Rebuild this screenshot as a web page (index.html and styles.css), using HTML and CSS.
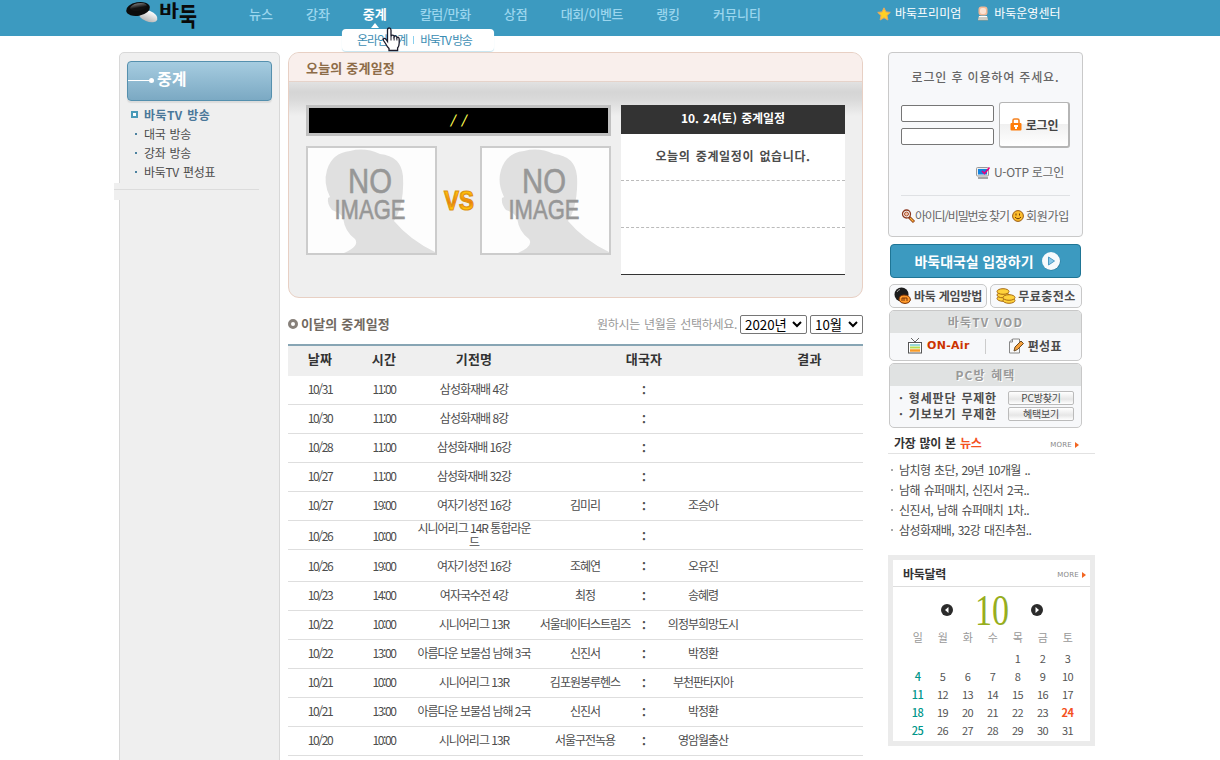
FILE: index.html
```
<!DOCTYPE html>
<html lang="ko">
<head>
    <meta charset="UTF-8">
    <title>바둑 - 중계</title>
    <link rel="stylesheet" href="styles.css">
</head>
<body>
    <div class="header">
        <div class="header-inner">
            <svg class="logo" width="72" height="30" viewBox="0 0 72 30">
                <defs>
                    <linearGradient id="white-stone" x1="0" y1="0" x2="0" y2="1">
                        <stop offset="0" stop-color="#fff"/>
                        <stop offset="1" stop-color="#b5b5b5"/>
                    </linearGradient>
                    <linearGradient id="black-stone" x1="0" y1="0" x2="0" y2="1">
                        <stop offset="0" stop-color="#777"/>
                        <stop offset=".6" stop-color="#111"/>
                    </linearGradient>
                </defs>
                <ellipse cx="22" cy="16" rx="10" ry="5.500" transform="rotate(22 22 16)" fill="url(#white-stone)"/>
                <ellipse cx="12" cy="9" rx="12" ry="6.800" transform="rotate(-10 12 9)" fill="#0c0c0c"/>
                <ellipse cx="12.500" cy="7" rx="8.500" ry="3.800" transform="rotate(-10 12.500 7)" fill="url(#black-stone)"/>
                <text class="logo-text" x="33" y="17" textLength="20" lengthAdjust="spacingAndGlyphs" font-size="17">바</text>
                <text class="logo-text" x="53" y="25.500" textLength="18" lengthAdjust="spacingAndGlyphs" font-size="26">둑</text>
            </svg>
            <ul class="nav">
                <li>뉴스</li>
                <li>강좌</li>
                <li class="on">중계</li>
                <li class="tight">칼럼/만화</li>
                <li>상점</li>
                <li class="tight">대회/이벤트</li>
                <li>랭킹</li>
                <li>커뮤니티</li>
            </ul>
            <div class="top-link">
                <svg width="14" height="14" viewBox="0 0 14 14"><path d="M7 .8l1.900 4.100 4.400.5-3.300 3 .9 4.600L7 10.800 3.100 13 4 8.400.7 5.400l4.400-.5z" fill="#ffd024" stroke="#e8a860"/></svg>
                <span>바둑프리미엄</span>
                <svg class="person" width="12" height="15" viewBox="0 0 12 15"><rect x="1.500" y=".5" width="9" height="9" rx="3" fill="#f2b896"/><rect x="3" y="2" width="6" height="6" rx="2" fill="#fbe3d3"/><path d="M2 10h8l1 4H1z" fill="#fff"/><path d="M1 12h10M1 14h10" stroke="#9a9a8a"/></svg>
                <span>바둑운영센터</span>
            </div>
        </div>
    </div>

    <div class="sub-nav">
        <span>온라인중계</span><i></i><span class="tv">바둑TV 방송</span>
    </div>
    <svg class="cursor" width="18" height="25" viewBox="0 0 18 25">
        <path d="M5.500 14.500V3q0-2 1.700-2T9 3v6.500q.3-1.500 1.800-1.300 1.200.1 1.300 1.500.5-1 1.700-.7 1 .3 1.100 1.600.6-.6 1.500-.2.800.4.800 1.800V16q0 3-1.600 5v2.500H7V21.500Q5 19.500 3.500 16.500l-2-3Q.8 12 1.900 11.500q1-.4 2 .7z" fill="#fff" stroke="#1b1b2c" stroke-width="1.300"/>
        <path d="M9 9.500v4M12.100 10v3.500M14.900 11v2.500" stroke="#1b1b2c"/>
    </svg>

    <div class="container">
        <div class="left">
            <div class="left-title"><i></i><b></b><span>중계</span></div>
            <ul class="left-menu">
                <li class="on">바둑TV 방송</li>
                <li>대국 방송</li>
                <li>강좌 방송</li>
                <li>바둑TV 편성표</li>
            </ul>
            <div class="left-line"></div>
        </div>

        <div class="main">
            <div class="today">
                <h2>오늘의 중계일정</h2>
                <div class="today-body">
                    <div class="match">
                        <div class="match-name">/ /</div>
                        <div class="players">
                            <svg class="photo" viewBox="0 0 127 105">
                                <path id="head" d="M36 105Q52 98 47 91 37 84 35 70 33 65 24 62 19 56 20 50l2-1Q15 35 19 22 24 5 42 3 57-1 72 6q21 2 23 22 1 17-3 32-2 7-6 13 16 19 41 31v1z" fill="#e0e0e0"/>
                                <text x="62" y="45" textLength="44" lengthAdjust="spacingAndGlyphs" font-size="35">NO</text>
                                <text x="62" y="71" textLength="71" lengthAdjust="spacingAndGlyphs" font-size="28">IMAGE</text>
                            </svg>
                            <svg class="vs" width="32" height="24" viewBox="0 0 32 24">
                                <defs>
                                    <linearGradient id="vs-fill" x1="0" y1="0" x2="0" y2="1">
                                        <stop offset=".2" stop-color="#ffc20a"/>
                                        <stop offset=".55" stop-color="#ee7f0c"/>
                                        <stop offset=".75" stop-color="#ffc20a"/>
                                    </linearGradient>
                                </defs>
                                <text x="1" y="21" textLength="30" lengthAdjust="spacingAndGlyphs" font-size="27">VS</text>
                            </svg>
                            <svg class="photo" viewBox="0 0 127 105">
                                <use href="#head"/>
                                <text x="62" y="45" textLength="44" lengthAdjust="spacingAndGlyphs" font-size="35">NO</text>
                                <text x="62" y="71" textLength="71" lengthAdjust="spacingAndGlyphs" font-size="28">IMAGE</text>
                            </svg>
                        </div>
                    </div>
                    <div class="today-list">
                        <h3>10. 24(토) 중계일정</h3>
                        <p>오늘의 중계일정이 없습니다.</p>
                        <p></p>
                        <p></p>
                    </div>
                </div>
            </div>

            <div class="month-head">
                <i class="ring"></i>
                <h2>이달의 중계일정</h2>
                <span>원하시는 년월을 선택하세요.</span>
                <div class="select year">2020년<svg width="10" height="7" viewBox="0 0 10 7"><path d="M1 1l4 4 4-4" fill="none" stroke="#000" stroke-width="2"/></svg></div>
                <div class="select month">10월<svg width="10" height="7" viewBox="0 0 10 7"><path d="M1 1l4 4 4-4" fill="none" stroke="#000" stroke-width="2"/></svg></div>
            </div>

            <table>
                <colgroup>
                    <col class="c-date"><col class="c-date"><col class="c-name"><col class="c-player"><col class="c-vs"><col class="c-player"><col>
                </colgroup>
                <thead>
                    <tr><th>날짜</th><th>시간</th><th>기전명</th><th colspan="3">대국자</th><th>결과</th></tr>
                </thead>
                <tbody>
                    <tr><td class="num">10/31</td><td class="num">11:00</td><td>삼성화재배 4강</td><td></td><td class="vs-mark">:</td><td></td><td></td></tr>
                    <tr><td class="num">10/30</td><td class="num">11:00</td><td>삼성화재배 8강</td><td></td><td class="vs-mark">:</td><td></td><td></td></tr>
                    <tr><td class="num">10/28</td><td class="num">11:00</td><td>삼성화재배 16강</td><td></td><td class="vs-mark">:</td><td></td><td></td></tr>
                    <tr><td class="num">10/27</td><td class="num">11:00</td><td>삼성화재배 32강</td><td></td><td class="vs-mark">:</td><td></td><td></td></tr>
                    <tr><td class="num">10/27</td><td class="num">19:00</td><td>여자기성전 16강</td><td>김미리</td><td class="vs-mark">:</td><td>조승아</td><td></td></tr>
                    <tr class="two-line"><td class="num">10/26</td><td class="num">10:00</td><td>시니어리그 14R 통합라운<br>드</td><td></td><td class="vs-mark">:</td><td></td><td></td></tr>
                    <tr class="tall"><td class="num">10/26</td><td class="num">19:00</td><td>여자기성전 16강</td><td>조혜연</td><td class="vs-mark">:</td><td>오유진</td><td></td></tr>
                    <tr><td class="num">10/23</td><td class="num">14:00</td><td>여자국수전 4강</td><td>최정</td><td class="vs-mark">:</td><td>송혜령</td><td></td></tr>
                    <tr><td class="num">10/22</td><td class="num">10:00</td><td>시니어리그 13R</td><td>서울데이터스트림즈</td><td class="vs-mark">:</td><td>의정부희망도시</td><td></td></tr>
                    <tr><td class="num">10/22</td><td class="num">13:00</td><td>아름다운 보물섬 남해 3국</td><td>신진서</td><td class="vs-mark">:</td><td>박정환</td><td></td></tr>
                    <tr><td class="num">10/21</td><td class="num">10:00</td><td>시니어리그 13R</td><td>김포원봉루헨스</td><td class="vs-mark">:</td><td>부천판타지아</td><td></td></tr>
                    <tr><td class="num">10/21</td><td class="num">13:00</td><td>아름다운 보물섬 남해 2국</td><td>신진서</td><td class="vs-mark">:</td><td>박정환</td><td></td></tr>
                    <tr><td class="num">10/20</td><td class="num">10:00</td><td>시니어리그 13R</td><td>서울구전녹용</td><td class="vs-mark">:</td><td>영암월출산</td><td></td></tr>
                </tbody>
            </table>
        </div>

        <div class="right">
            <div class="login">
                <p class="login-msg">로그인 후 이용하여 주세요.</p>
                <div class="login-form">
                    <div class="inputs">
                        <input type="text">
                        <input type="password">
                    </div>
                    <button type="button">
                        <svg width="12" height="13" viewBox="0 0 12 13"><path d="M3 6V2.500Q3 1 4.500 1h3Q9 1 9 2.500V6" fill="none" stroke="#f58220" stroke-width="1.600"/><rect x=".5" y="5" width="11" height="7.500" rx="1" fill="#ff7d0a"/><path d="M4 7h4v2H7v2H5V9H4z" fill="#fff"/></svg>
                        로그인
                    </button>
                </div>
                <div class="otp">
                    <svg width="14" height="13" viewBox="0 0 14 13"><rect x=".5" y="1.500" width="12" height="8.500" rx="1" fill="#eee" stroke="#999"/><rect x="2" y="3" width="9" height="5.500" fill="#1283e0"/><path d="M2 12h10" stroke="#888" stroke-width="1.500"/><path d="M6 5l2.500 2.500L13.500 1.500" fill="none" stroke="#e6007e" stroke-width="1.600"/></svg>
                    <span>U-OTP 로그인</span>
                </div>
                <div class="login-links">
                    <svg width="14" height="14" viewBox="0 0 14 14"><path d="M8 8l5 5" stroke="#8c3a10" stroke-width="3"/><path d="M9 9l3.500 3.500" stroke="#ffb43c" stroke-width="1.300"/><circle cx="5.500" cy="5" r="4" fill="#fff" stroke="#8c3a22" stroke-width="1.300"/><circle cx="5.500" cy="5" r="2" fill="#f4c0a8" stroke="#a8522e"/></svg>
                    <span class="find">아이디/비밀번호 찾기</span>
                    <svg width="12" height="12" viewBox="0 0 12 12"><circle cx="6" cy="6" r="5.400" fill="#fdbd2c" stroke="#9a5a10"/><path d="M4 3.500v2M7.500 3.500v2M3 7q3 3.500 6 0" fill="none" stroke="#6b3a08"/></svg>
                    <span class="join">회원가입</span>
                </div>
            </div>

            <div class="enter">
                바둑대국실 입장하기
                <svg width="20" height="20" viewBox="0 0 20 20"><circle cx="10.500" cy="10.500" r="9" fill="#2c7899"/><circle cx="10" cy="10" r="9" fill="#f7fafc"/><path d="M7.500 6l6 4-6 4z" fill="#8cc8e8" stroke="#4a9ac4"/></svg>
            </div>
            <div class="pair">
                <div class="small-btn how">
                    <svg width="18" height="18" viewBox="0 0 18 18"><circle cx="7.500" cy="7.500" r="7" fill="#1c1c1c"/><path d="M3 5q1-2 3-2.500" fill="none" stroke="#aaa"/><path d="M5 13q0-5 5-5 6 0 6.500 5-1 3.500-5.500 3.500T5 13z" fill="#ff9a2b" stroke="#7a3408"/><path d="M8 14v-3h2v3m0-3h3v3" fill="none" stroke="#7a3408"/></svg>
                    바둑 게임방법
                </div>
                <div class="small-btn charge">
                    <svg width="20" height="16" viewBox="0 0 20 16"><g fill="#ffd23c" stroke="#a86a10"><ellipse cx="7" cy="10.500" rx="6" ry="2.800"/><ellipse cx="7" cy="7" rx="6" ry="2.800"/><ellipse cx="7" cy="3.500" rx="6" ry="2.800"/><ellipse cx="13" cy="12.500" rx="6" ry="2.800"/><ellipse cx="13" cy="9.500" rx="6" ry="2.800"/></g></svg>
                    무료충전소
                </div>
            </div>
            <div class="panel vod">
                <h4>바둑TV VOD</h4>
                <div class="vod-body">
                    <div class="onair">
                        <svg width="14" height="16" viewBox="0 0 14 16"><path d="M3 0l4 4 4-4" fill="none" stroke="#666"/><rect x=".5" y="4.500" width="13" height="10.500" fill="#fff" stroke="#555"/><path d="M2 7h10" stroke="#9ad8d8" stroke-width="2"/><path d="M2 9.500h10" stroke="#b3dc50" stroke-width="2"/><path d="M2 12.500h10" stroke="#f79a28" stroke-width="2.500"/></svg>
                        ON-Air
                    </div>
                    <i></i>
                    <div class="sheet">
                        <svg width="15" height="16" viewBox="0 0 15 16"><path d="M3.500 1h7v14h-10V4z" fill="#fafafa" stroke="#888"/><path d="M.5 4h3V1" fill="none" stroke="#888"/><path d="M5 13l1-4 6-6 2.500 2.500-6 6z" fill="#f5a03c" stroke="#6b4a22"/></svg>
                        편성표
                    </div>
                </div>
            </div>
            <div class="panel pc">
                <h4>PC방 혜택</h4>
                <div class="pc-row"><span>· 형세판단 무제한</span><b>PC방찾기</b></div>
                <div class="pc-row"><span>· 기보보기 무제한</span><b>혜택보기</b></div>
            </div>

            <div class="news-head">
                <h4>가장 많이 본 <em>뉴스</em></h4>
                <span class="more">MORE</span>
            </div>
            <ul class="news">
                <li>남치형 초단, 29년 10개월 ..</li>
                <li>남해 슈퍼매치, 신진서 2국..</li>
                <li>신진서, 남해 슈퍼매치 1차..</li>
                <li>삼성화재배, 32강 대진추첨..</li>
            </ul>

            <div class="calendar">
                <div class="cal-head">
                    <h4>바둑달력</h4>
                    <span class="more">MORE</span>
                </div>
                <div class="cal-month">
                    <svg width="12" height="12" viewBox="0 0 12 12"><circle cx="6" cy="6" r="6" fill="#2b2b2b"/><path d="M7.500 3v6L4 6z" fill="#fff"/></svg>
                    <svg class="ten" width="34" height="36" viewBox="0 0 34 36"><text x="0" y="33" textLength="34" lengthAdjust="spacingAndGlyphs" font-size="44">10</text></svg>
                    <svg width="12" height="12" viewBox="0 0 12 12"><circle cx="6" cy="6" r="6" fill="#2b2b2b"/><path d="M4.500 3v6L8 6z" fill="#fff"/></svg>
                </div>
                <div class="days">
                    <span>일</span><span>월</span><span>화</span><span>수</span><span>목</span><span>금</span><span>토</span>
                </div>
                <div class="dates">
                    <span></span><span></span><span></span><span></span><span>1</span><span>2</span><span>3</span>
                    <span class="sun">4</span><span>5</span><span>6</span><span>7</span><span>8</span><span>9</span><span>10</span>
                    <span class="sun">11</span><span>12</span><span>13</span><span>14</span><span>15</span><span>16</span><span>17</span>
                    <span class="sun">18</span><span>19</span><span>20</span><span>21</span><span>22</span><span>23</span><span class="today-date">24</span>
                    <span class="sun">25</span><span>26</span><span>27</span><span>28</span><span>29</span><span>30</span><span>31</span>
                </div>
            </div>
        </div>
    </div>
</body>
</html>
```
FILE: styles.css
```
*,
*::before {
    box-sizing: border-box;
}

body {
    margin: 0;
    height: 760px;
    overflow: hidden;
    position: relative;
    background: #fff;
    color: #4c4c4c;
    font-family: "Noto Sans CJK KR", "Liberation Sans", sans-serif;
    font-size: 12px;
    line-height: 16px;
    letter-spacing: -1px;
}

h2, h3, h4, p, ul {
    margin: 0;
    padding: 0;
    list-style: none;
}

svg {
    display: block;
    flex: none;
    overflow: visible;
}

/* header */
.header {
    height: 36px;
    background: #3c9ac0;
}

.header-inner {
    display: flex;
    padding-left: 126px;
    height: 36px;
}

.logo-text {
    font-weight: 700;
    fill: #0a0a0a;
    letter-spacing: 0;
}

.nav {
    display: flex;
    gap: 33px;
    margin-left: 51px;
    width: 627px;
    padding-top: 5px;
    font-size: 13px;
    font-weight: 500;
    line-height: 18px;
    letter-spacing: 0;
    color: #9bd6ee;
    white-space: nowrap;
}

.nav .tight {
    letter-spacing: -0.4px;
}

.nav .on {
    color: #fff;
    font-weight: 700;
}

.nav .on::after {
    content: "";
    display: block;
    width: 0;
    margin: 0 auto;
    border: 4px solid transparent;
    border-top: 0;
    border-bottom: 5px solid #fff;
}

.top-link {
    display: flex;
    align-items: flex-start;
    padding-top: 5px;
    color: #fff;
    white-space: nowrap;
}

.top-link svg {
    margin: 2px 4px 0 1px;
}

.top-link .person {
    margin: 1px 5px 0 16px;
}

.top-link span {
    letter-spacing: 0;
}

.sub-nav {
    position: absolute;
    left: 342px;
    top: 29px;
    z-index: 2;
    display: flex;
    align-items: center;
    width: 152px;
    height: 22px;
    padding-left: 15px;
    border-radius: 4px;
    background: #fff;
    box-shadow: 0 1px 1px #c5e4f0;
    color: #3c8db3;
    white-space: nowrap;
}

.sub-nav i {
    width: 1px;
    height: 8px;
    margin: 0 6px 0 6px;
    background: #8ad0ee;
}

.sub-nav .tv {
    letter-spacing: -1.5px;
}

.cursor {
    position: absolute;
    left: 382px;
    top: 27px;
    z-index: 3;
}

.container {
    display: flex;
    align-items: flex-start;
    padding: 16px 0 0 119px;
}

/* left menu */
.left {
    width: 161px;
    height: 720px;
    padding: 8px 7px 0;
    border: 1px solid #d8d8d8;
    border-radius: 5px;
    background: #efefef;
}

.left-title {
    display: flex;
    align-items: center;
    width: 145px;
    height: 40px;
    padding-bottom: 2px;
    border: 1px solid #5590ae;
    border-radius: 4px;
    background: linear-gradient(#a6cce0, #7ba9c3);
    box-shadow: 0 2px 1px #dcdcdc;
    color: #fff;
    font-size: 16px;
    font-weight: 700;
    letter-spacing: 0;
}

.left-title i {
    width: 21px;
    height: 1px;
    background: #fff;
}

.left-title b {
    width: 5px;
    height: 5px;
    margin-right: 3px;
    border-radius: 50%;
    background: #fff;
}

.left-title span {
    padding-bottom: 4px;
}

.left-menu {
    padding-top: 4px;
}

.left-menu li {
    display: flex;
    align-items: center;
    height: 19px;
    padding-left: 8px;
    letter-spacing: -0.3px;
    word-spacing: 1px;
}

.left-menu li::before {
    content: "";
    width: 2px;
    height: 2px;
    margin-right: 7px;
    background: #4c82a0;
}

.left-menu .on {
    padding-left: 4px;
    color: #4a789a;
    font-weight: 700;
    letter-spacing: 0.4px;
}

.left-menu .on::before {
    width: 7px;
    height: 7px;
    margin-right: 6px;
    border: 2px solid #4a9ab8;
    background: #fff;
}

.left-line {
    width: 145px;
    height: 17px;
    margin: 2px 0 0 -13px;
    background: linear-gradient(#dcdcdc, #dcdcdc) 0 6px / 100% 1px no-repeat #efefef;
}

/* main */
.main {
    width: 575px;
    margin-left: 8px;
}

.today {
    height: 246px;
    border: 1px solid #e8d0c4;
    border-radius: 11px;
    background: #efefef;
    overflow: hidden;
}

.today h2 {
    height: 29px;
    padding: 6px 0 0 17px;
    border-bottom: 1px solid #e6d3ca;
    background: #f9efec;
    color: #8d6c48;
    font-size: 13px;
    line-height: 18px;
    letter-spacing: 0.2px;
}

.today-body {
    display: flex;
    gap: 10px;
    padding: 23px 17px 0;
    background: linear-gradient(#e2e2e2, #d5d5d5 10px, #dadada 18px, #efefef 34px);
}

.match {
    width: 305px;
}

.match-name {
    height: 31px;
    border: 3px solid #c0c0c0;
    background: #000;
    color: #ffff50;
    font-style: italic;
    font-weight: 700;
    line-height: 23px;
    letter-spacing: 1.5px;
    text-align: center;
}

.players {
    display: flex;
    align-items: center;
    justify-content: space-between;
    margin-top: 10px;
}

.photo {
    width: 131px;
    height: 109px;
    border: 2px solid #ccc;
    background: #fdfdfd;
}

.photo text {
    font-family: "Liberation Sans", sans-serif;
    fill: #979797;
    stroke: #979797;
    stroke-width: 0.6;
    letter-spacing: 0;
    text-anchor: middle;
}

.vs text {
    font-family: "Liberation Sans", sans-serif;
    font-weight: 700;
    fill: url(#vs-fill);
    stroke: #dd9312;
    stroke-width: 1.2;
    letter-spacing: 0;
}

.today-list {
    width: 224px;
    background: #fff;
}

.today-list h3 {
    height: 29px;
    background: #333;
    color: #fff;
    font-size: 12px;
    line-height: 26px;
    letter-spacing: -0.1px;
    word-spacing: 1px;
    text-align: center;
}

.today-list p {
    height: 47px;
    border-bottom: 1px dashed #bbb;
    font-weight: 700;
    line-height: 44px;
    letter-spacing: 0.6px;
    word-spacing: 1.5px;
    text-align: center;
}

.today-list p:last-child {
    border-bottom: 1px solid #333;
}

.month-head {
    display: flex;
    align-items: center;
    height: 20px;
    margin: 16px 0 10px;
}

.ring {
    width: 10px;
    height: 10px;
    margin-right: 3px;
    border: 3px solid #87807a;
    border-radius: 50%;
}

.month-head h2 {
    margin-right: auto;
    color: #706860;
    font-size: 13px;
    letter-spacing: 0.2px;
}

.month-head span {
    margin-right: 3px;
    color: #999;
    letter-spacing: -0.3px;
    word-spacing: 1px;
}

.select {
    display: flex;
    align-items: center;
    justify-content: space-between;
    height: 19px;
    padding: 0 4px;
    border: 1px solid #767676;
    border-radius: 2px;
    background: #fff;
    color: #000;
    font-size: 13.33px;
    line-height: 17px;
    letter-spacing: 0;
    white-space: nowrap;
}

.year {
    width: 67px;
    margin-right: 3px;
}

.month {
    width: 53px;
}

table {
    width: 575px;
    table-layout: fixed;
    border-collapse: separate;
    border-spacing: 0;
    border-top: 2px solid #87a5b4;
}

.c-date {
    width: 64px;
}

.c-name {
    width: 116px;
}

.c-player {
    width: 106px;
}

.c-vs {
    width: 12px;
}

th {
    height: 30px;
    padding: 0 0 4px;
    background: #efefef;
    color: #333;
    font-size: 13px;
    letter-spacing: 0.2px;
}

td {
    height: 29px;
    padding: 0 0 3px;
    border-bottom: 1px solid #dedede;
    text-align: center;
    white-space: nowrap;
}

.num {
    letter-spacing: -1.4px;
}

.vs-mark {
    padding-bottom: 1px;
    font-weight: 700;
    letter-spacing: 0;
}

.two-line td {
    padding: 0;
    line-height: 14px;
}

.two-line .num,
.two-line .vs-mark {
    padding-top: 2px;
}

.tall td {
    height: 32px;
    padding-bottom: 0;
}

/* right */
.right {
    width: 207px;
    margin-left: 25px;
}

.login {
    width: 195px;
    height: 185px;
    padding: 16px 12px 0;
    border: 1px solid #c9c9c9;
    border-radius: 4px;
    background: #f7f8fa;
    color: #666;
}

.login-msg {
    font-weight: 500;
    letter-spacing: 0.85px;
    text-align: center;
    white-space: nowrap;
}

.login-form {
    display: flex;
    gap: 5px;
    margin-top: 17px;
}

.inputs {
    display: flex;
    flex-direction: column;
    gap: 6px;
    padding-top: 3px;
}

input {
    display: block;
    width: 93px;
    height: 17px;
    padding: 0;
    border: 1px solid #767676;
    border-radius: 2px;
    background: #fff;
}

.login button {
    display: flex;
    align-items: center;
    justify-content: center;
    gap: 4px;
    flex: none;
    width: 71px;
    height: 46px;
    padding: 0;
    border: 1px solid #b5b5b5;
    border-right-width: 2px;
    border-bottom-width: 2px;
    border-radius: 3px;
    background: linear-gradient(#fff 48%, #f0f0f0 50%, #fff);
    color: #444;
    font-family: inherit;
    font-size: 12px;
    font-weight: 700;
    letter-spacing: -0.2px;
}

.otp {
    display: flex;
    align-items: center;
    justify-content: flex-end;
    gap: 4px;
    width: 163px;
    margin-top: 16px;
    letter-spacing: -0.3px;
}

.login-links {
    display: flex;
    align-items: center;
    width: 169px;
    margin-top: 15px;
    padding-top: 12px;
    border-top: 1px solid #dfe1e4;
    white-space: nowrap;
}

.login-links .find {
    width: 97px;
    letter-spacing: -1.25px;
}

.login-links .join {
    margin-left: 2px;
    letter-spacing: -0.3px;
}

.enter {
    display: flex;
    align-items: center;
    justify-content: center;
    gap: 8px;
    width: 191px;
    height: 34px;
    margin: 7px 0 0 2px;
    padding-left: 5px;
    border: 1px solid #1f7595;
    border-radius: 4px;
    background: #3c9ac0;
    color: #fff;
    font-size: 14px;
    font-weight: 700;
    letter-spacing: -0.1px;
    white-space: nowrap;
}

.pair {
    display: flex;
    gap: 3px;
    margin: 6px 0 2px 1px;
}

.small-btn {
    display: flex;
    align-items: center;
    justify-content: center;
    gap: 2px;
    height: 24px;
    border: 1px solid #c8c8c8;
    border-radius: 5px;
    background: #f8f9fb;
    font-size: 12px;
    font-weight: 700;
    white-space: nowrap;
}

.how {
    width: 98px;
    letter-spacing: -0.2px;
}

.charge {
    width: 92px;
    letter-spacing: 0.5px;
}

.panel {
    width: 193px;
    margin: 0 0 2px 1px;
    border: 1px solid #c8c8c8;
    border-radius: 5px;
    background: #f7f8fa;
    overflow: hidden;
}

.panel h4 {
    height: 22px;
    background: #e0e2e2;
    color: #999;
    font-size: 12px;
    line-height: 22px;
    letter-spacing: 1.1px;
    word-spacing: 1px;
    text-align: center;
    text-shadow: 1px 1px 0 #fff;
}

.vod {
    height: 51px;
}

.vod-body {
    display: flex;
    align-items: center;
    height: 26px;
    padding-left: 18px;
    font-weight: 700;
    letter-spacing: 0.4px;
}

.vod-body i {
    width: 1px;
    height: 15px;
    margin: 0 23px 0 15px;
    background: #ccc;
}

.onair,
.sheet {
    display: flex;
    align-items: center;
    gap: 4px;
}

.onair {
    gap: 5px;
    color: #cc3300;
    font-family: "DejaVu Sans", sans-serif;
    font-size: 11px;
    letter-spacing: 0.3px;
}

.pc {
    height: 65px;
}

.pc h4 {
    margin-bottom: 4px;
}

.pc-row {
    display: flex;
    align-items: center;
    justify-content: space-between;
    height: 16px;
    padding: 0 7px 0 9px;
    font-weight: 700;
    letter-spacing: 0.8px;
    word-spacing: 1px;
    white-space: nowrap;
}

.pc-row b {
    width: 66px;
    height: 14px;
    border: 1px solid #bbb;
    border-radius: 2px;
    background: linear-gradient(#fff, #e6e6e6 60%, #fff);
    font-size: 10px;
    font-weight: 400;
    line-height: 12px;
    letter-spacing: -0.2px;
    text-align: center;
}

.news-head {
    display: flex;
    align-items: center;
    justify-content: space-between;
    height: 24px;
    padding: 3px 16px 0 6px;
    border-bottom: 1px solid #e2e2e2;
}

.news-head h4,
.cal-head h4 {
    color: #333;
    font-size: 12px;
    letter-spacing: -0.3px;
}

.news-head h4 {
    padding-bottom: 1px;
    word-spacing: 1px;
}

.news-head em {
    color: #f4511e;
    font-style: normal;
}

.more {
    display: flex;
    align-items: center;
    gap: 3px;
    padding-top: 4px;
    color: #888;
    font-family: "DejaVu Sans", sans-serif;
    font-size: 7px;
    letter-spacing: 0.2px;
}

.more::after {
    content: "";
    border: 3px solid transparent;
    border-left: 4px solid #f26522;
    border-right: 0;
}

.news {
    padding: 6px 0 0 3px;
}

.news li {
    display: flex;
    align-items: center;
    height: 20px;
    letter-spacing: -0.6px;
    word-spacing: 1px;
}

.news li::before {
    content: "";
    width: 2px;
    height: 2px;
    margin-right: 6px;
    background: #aaa;
}

.calendar {
    height: 191px;
    margin-top: 15px;
    border: 5px solid #ebebeb;
    background: #fff;
}

.cal-head {
    display: flex;
    align-items: center;
    justify-content: space-between;
    height: 27px;
    padding: 2px 4px 0 10px;
    border-bottom: 1px solid #ddd;
}

.cal-head .more {
    padding-top: 1px;
}

.cal-month {
    display: flex;
    align-items: center;
    justify-content: center;
    gap: 22px;
    height: 42px;
    padding-top: 4px;
}

.ten text {
    font-family: "Liberation Serif", serif;
    fill: #97ae1e;
    letter-spacing: 0;
}

.days,
.dates {
    display: grid;
    grid-template-columns: repeat(7, 25px);
    padding-left: 12px;
    text-align: center;
    letter-spacing: -0.6px;
}

.days {
    height: 20px;
    font-size: 11px;
    color: #999;
}

.dates {
    grid-auto-rows: 18px;
    padding-top: 1px;
    font-size: 11px;
    color: #555;
}

.dates .sun {
    color: #00968a;
    font-weight: 500;
}

.dates .today-date {
    color: #f4511e;
    font-weight: 700;
}
```
